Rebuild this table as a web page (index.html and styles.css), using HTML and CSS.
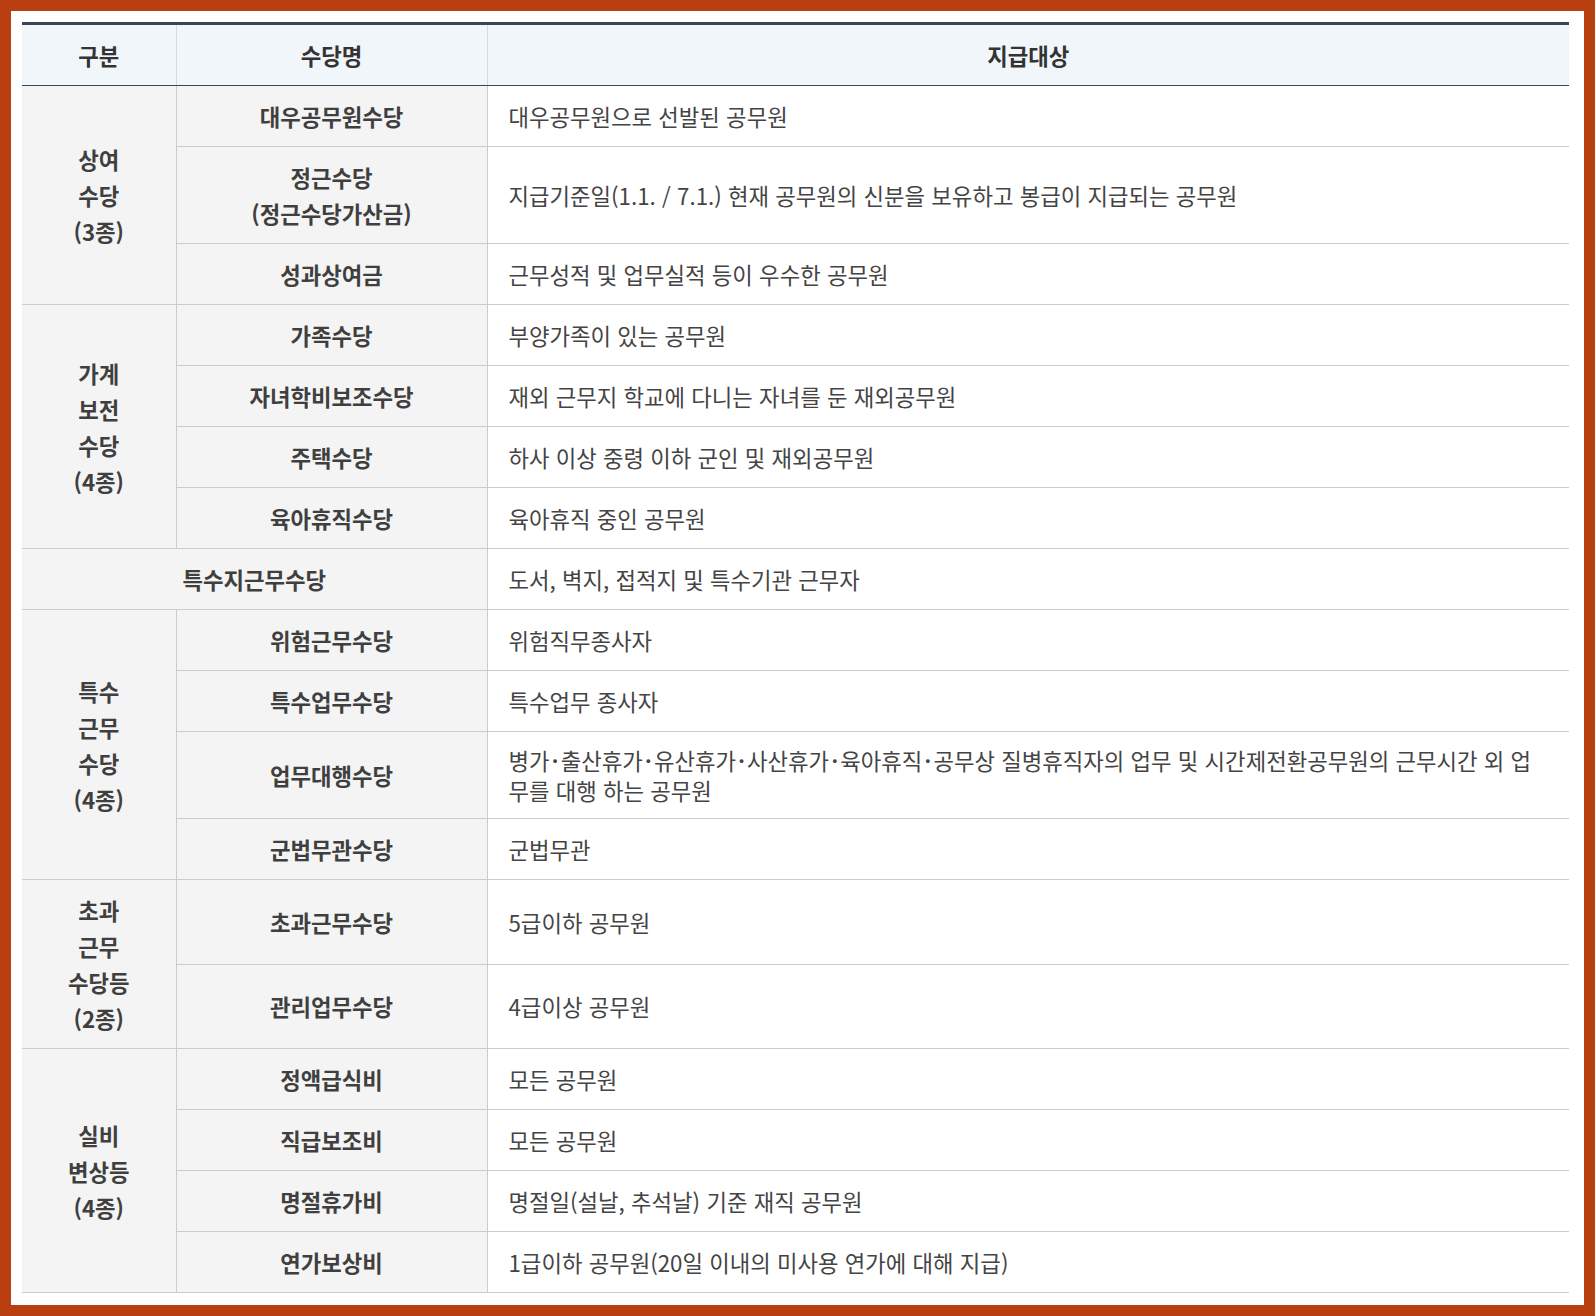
FILE: index.html
```html
<!DOCTYPE html>
<html lang="ko">
<head>
<meta charset="utf-8">
<title>수당 지급대상</title>
<link rel="stylesheet" href="styles.css">
</head>
<body>
<div class="frame">
  <table class="allow">
    <colgroup>
      <col class="c1">
      <col class="c2">
      <col class="c3">
    </colgroup>
    <thead>
      <tr>
        <th>구분</th>
        <th>수당명</th>
        <th>지급대상</th>
      </tr>
    </thead>
    <tbody>
      <tr>
        <th class="grp" rowspan="3">상여<br>수당<br>(3종)</th>
        <th class="name">대우공무원수당</th>
        <td>대우공무원으로 선발된 공무원</td>
      </tr>
      <tr>
        <th class="name">정근수당<br>(정근수당가산금)</th>
        <td>지급기준일(1.1. / 7.1.) 현재 공무원의 신분을 보유하고 봉급이 지급되는 공무원</td>
      </tr>
      <tr>
        <th class="name">성과상여금</th>
        <td>근무성적 및 업무실적 등이 우수한 공무원</td>
      </tr>
      <tr>
        <th class="grp" rowspan="4">가계<br>보전<br>수당<br>(4종)</th>
        <th class="name">가족수당</th>
        <td>부양가족이 있는 공무원</td>
      </tr>
      <tr>
        <th class="name">자녀학비보조수당</th>
        <td>재외 근무지 학교에 다니는 자녀를 둔 재외공무원</td>
      </tr>
      <tr>
        <th class="name">주택수당</th>
        <td>하사 이상 중령 이하 군인 및 재외공무원</td>
      </tr>
      <tr>
        <th class="name">육아휴직수당</th>
        <td>육아휴직 중인 공무원</td>
      </tr>
      <tr>
        <th class="name" colspan="2">특수지근무수당</th>
        <td>도서, 벽지, 접적지 및 특수기관 근무자</td>
      </tr>
      <tr>
        <th class="grp" rowspan="4">특수<br>근무<br>수당<br>(4종)</th>
        <th class="name">위험근무수당</th>
        <td>위험직무종사자</td>
      </tr>
      <tr>
        <th class="name">특수업무수당</th>
        <td>특수업무 종사자</td>
      </tr>
      <tr>
        <th class="name">업무대행수당</th>
        <td>병가･출산휴가･유산휴가･사산휴가･육아휴직･공무상 질병휴직자의 업무 및 시간제전환공무원의 근무시간 외 업무를 대행 하는 공무원</td>
      </tr>
      <tr>
        <th class="name">군법무관수당</th>
        <td>군법무관</td>
      </tr>
      <tr>
        <th class="grp" rowspan="2">초과<br>근무<br>수당등<br>(2종)</th>
        <th class="name">초과근무수당</th>
        <td>5급이하 공무원</td>
      </tr>
      <tr>
        <th class="name">관리업무수당</th>
        <td>4급이상 공무원</td>
      </tr>
      <tr>
        <th class="grp" rowspan="4">실비<br>변상등<br>(4종)</th>
        <th class="name">정액급식비</th>
        <td>모든 공무원</td>
      </tr>
      <tr>
        <th class="name">직급보조비</th>
        <td>모든 공무원</td>
      </tr>
      <tr>
        <th class="name">명절휴가비</th>
        <td>명절일(설날, 추석날) 기준 재직 공무원</td>
      </tr>
      <tr>
        <th class="name">연가보상비</th>
        <td>1급이하 공무원(20일 이내의 미사용 연가에 대해 지급)</td>
      </tr>
    </tbody>
  </table>
</div>
</body>
</html>
```

FILE: styles.css
```css
html, body {
  margin: 0;
  padding: 0;
}

body {
  background: #b93e10;
  padding: 11px;
  font-family: "Noto Sans CJK KR", "Noto Sans", sans-serif;
  color: #444;
}

.frame {
  background: #ffffff;
  padding: 11px 15px 12px 11px;
}

.allow {
  width: 100%;
  table-layout: fixed;
  border-collapse: collapse;
  border-top: 3px solid #3b4657;
  border-bottom: 1px solid #cccccc;
  font-size: 22.3px;
}

.c1 { width: 154px; }
.c2 { width: 311px; }

.allow thead th {
  background: #f1f6fa;
  height: 60px;
  padding: 0;
  font-weight: 700;
  color: #333;
  line-height: 36px;
  text-align: center;
  border-left: 1px solid #d6dbe0;
  border-bottom: 1px solid #3b4657;
}

.allow thead th:first-child {
  border-left: none;
}

.allow tbody th,
.allow tbody td {
  border-top: 1px solid #cccccc;
  border-left: 1px solid #cccccc;
}

.allow tbody th {
  background: #f4f4f4;
  font-weight: 700;
  color: #3f3f3f;
  text-align: center;
  padding: 12px 6px;
  line-height: 36px;
}

.allow tbody th.grp {
  border-left: none;
}

.allow tbody th[colspan] {
  border-left: none;
}

.allow tbody td {
  background: #ffffff;
  padding: 13px 20px 13px 21px;
  line-height: 30px;
  height: 34px;
  color: #444;
}
```
